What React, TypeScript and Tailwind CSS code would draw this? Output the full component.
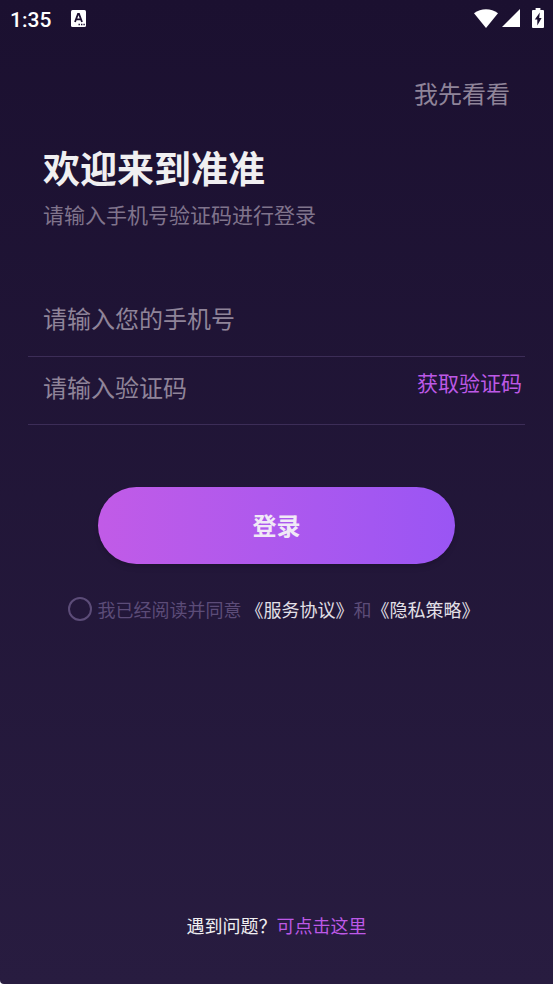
import React, { useState } from 'react';

const StatusBar: React.FC = () => (
  <header className="flex h-9 items-center justify-between pl-[10px] pr-[9px] text-white">
    <div className="flex items-center gap-5">
      <span className="pt-1 font-[Roboto,sans-serif] text-[21px] leading-6 font-medium">1:35</span>
      <svg width="15" height="17" viewBox="0 0 15 17" aria-hidden="true">
        <rect width="15" height="17" rx="1.5" fill="#fff" />
        <path d="M4 12 7 4h1l3 8M5.2 9.3h4.6" fill="none" stroke="#1c1030" strokeWidth="1.8" />
        <path d="M7.5 14.5h1.4M10 14.5h1.4M12.4 14.5h1.4" stroke="#1c1030" strokeWidth="1.4" />
      </svg>
    </div>
    <div className="flex items-center">
      <svg width="24" height="19" viewBox="0 0 24 19" fill="#fff" aria-hidden="true">
        <path d="M0 4.2C7-1.2 17-1.2 24 4.2L12 19Z" />
      </svg>
      <svg className="ml-1" width="18" height="18" viewBox="0 0 18 18" fill="#fff" aria-hidden="true">
        <path d="M18 0v18H0Z" />
      </svg>
      <svg className="ml-3" width="12" height="20" viewBox="0 0 12 20" aria-hidden="true">
        <path d="M3.6 0h4.8v2H11q1 0 1 1v16q0 1-1 1H1q-1 0-1-1V3q0-1 1-1h2.6Z" fill="#fff" />
        <path d="M7.8 4.5 2.8 11.5h2.5v6L9.6 10H7.2Z" fill="#1c1030" />
      </svg>
    </div>
  </header>
);

const App: React.FC = () => {
  const [phone, setPhone] = useState('');
  const [code, setCode] = useState('');
  const [agreed, setAgreed] = useState(false);

  return (
    <div className="bg-white font-['Noto_Sans_CJK_SC',sans-serif]">
      <div className="flex min-h-screen flex-col rounded-bl-sm bg-linear-to-b from-[#1b1030] to-[#281c40]">
        <StatusBar />

        <main className="flex grow flex-col">
          <button type="button" className="mt-[39px] mr-[43px] self-end text-2xl leading-9 text-[#8f8499]">
            我先看看
          </button>

          <h1 className="mt-7 ml-[43px] text-[37px] leading-14 font-bold text-[#f0eff1]">欢迎来到准准</h1>
          <p className="mt-[3px] ml-[43px] text-[21px] leading-8 text-[#80748c]">请输入手机号验证码进行登录</p>

          <form className="mt-[49px] flex flex-col" onSubmit={(e) => e.preventDefault()}>
            <div className="mx-7 flex h-[78px] items-center border-b border-[#3c2d57] pl-[15px]">
              <input
                type="tel"
                aria-label="手机号"
                placeholder="请输入您的手机号"
                value={phone}
                onChange={(e) => setPhone(e.target.value)}
                className="h-9 w-full min-w-0 bg-transparent text-2xl text-[#f0eff1] outline-none placeholder:text-[#8f8499]"
              />
            </div>
            <div className="mx-7 flex h-[68px] items-start justify-between border-b border-[#3c2d57] pt-[11px] pr-[3px] pl-[15px]">
              <input
                type="text"
                inputMode="numeric"
                aria-label="验证码"
                placeholder="请输入验证码"
                value={code}
                onChange={(e) => setCode(e.target.value)}
                className="h-9 w-full min-w-0 bg-transparent text-2xl text-[#f0eff1] outline-none placeholder:text-[#8f8499]"
              />
              <button type="button" className="shrink-0 text-[21px] leading-7 text-[#bd59e6]">
                获取验证码
              </button>
            </div>

            <button
              type="submit"
              className="mx-[98px] mt-[62px] h-[77px] rounded-full bg-linear-to-r from-[#c15be7] to-[#9a55f4] pb-[2px] text-2xl font-bold text-[#f0e9f6] shadow-md"
            >
              登录
            </button>

            <div className="mt-[27px] flex items-center justify-center gap-[6px] pr-[6px] text-lg leading-9 text-[#5c4c78]">
              <input
                id="agree"
                type="checkbox"
                checked={agreed}
                onChange={(e) => setAgreed(e.target.checked)}
                className="size-6 shrink-0 appearance-none rounded-full border-2 border-[#5c4c78] checked:bg-[#bd59e6]"
              />
              <p>
                <label htmlFor="agree" className="mr-1">我已经阅读并同意</label>
                <a href="#service" className="text-[#e4e0e8]">《服务协议》</a>
                和
                <a href="#privacy" className="text-[#e4e0e8]">《隐私策略》</a>
              </p>
            </div>
          </form>
        </main>

        <footer className="pb-[41px] text-center text-lg leading-9 text-[#f0eff1]">
          遇到问题？
          <a href="#help" className="text-[#bd59e6]">可点击这里</a>
        </footer>
      </div>
    </div>
  );
};

export default App;
